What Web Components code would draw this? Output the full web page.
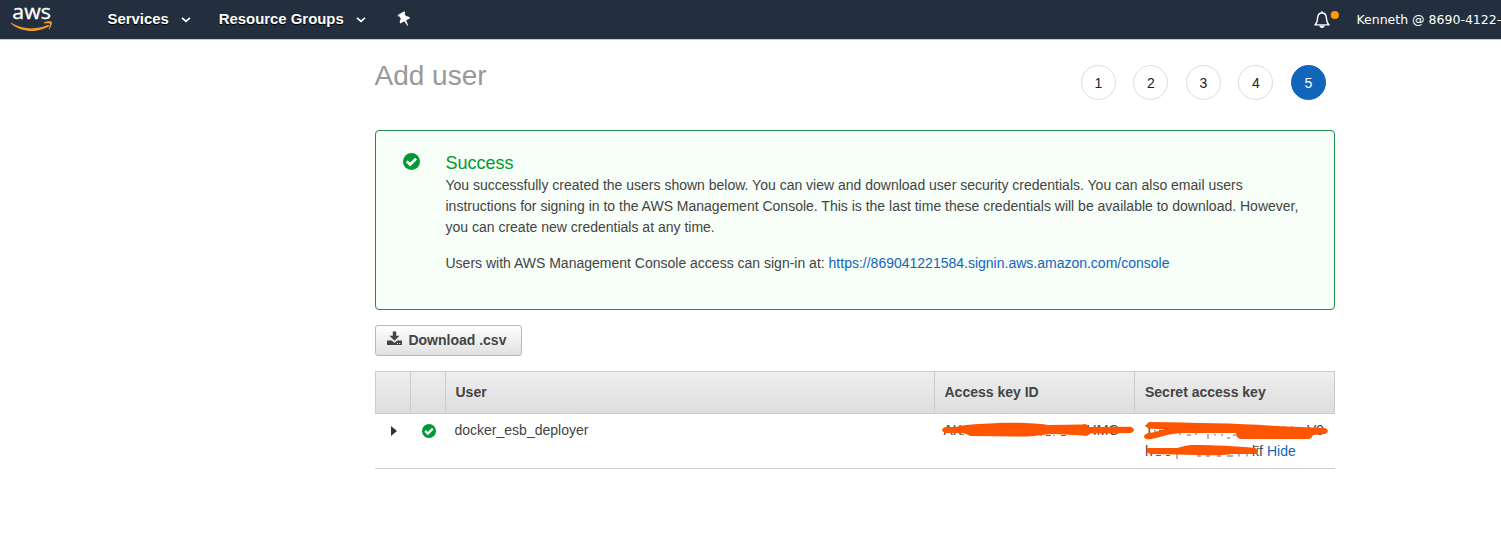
<!DOCTYPE html>
<html lang="en"><head><meta charset="utf-8"><title>Add user</title>
<style>html,body{margin:0;height:100%;background:#fff;overflow:hidden}body{font:14px/21px "Liberation Sans",Arial,sans-serif;color:#444}</style></head>
<body><iam-page></iam-page>
<script>
const define=(name,html)=>customElements.define(name,class extends HTMLElement{
  constructor(){super();const t=document.createElement('template');t.innerHTML=html;this.attachShadow({mode:'open'}).append(t.content.cloneNode(true));}
});

define('nav-menu',`<style>
:host{display:flex;align-items:center;gap:12px;font-weight:700;font-size:14.9px;line-height:20px;color:#fff;white-space:nowrap;text-shadow:0 1px 1px #000}
svg{display:block;margin-top:2px}</style><span><slot></slot></span>
<svg width="10" height="6" viewBox="0 0 10 6"><path d="M1 .8 5 4.4 9 .8" fill="none" stroke="#fff" stroke-width="1.7"/></svg>`);

define('aws-logo',`<style>
:host{display:block;width:42px;height:34px}
svg{display:block;overflow:visible}text{font:400 20.5px "Open Sans","Noto Sans",sans-serif;fill:#fff;stroke:#fff;stroke-width:.35px}</style>
<svg width="42" height="34" viewBox="0 0 42 34"><text x="1.3" y="18.6" textLength="38.5" lengthAdjust="spacingAndGlyphs">aws</text>
<path d="M.3 22.7C11.5 29.8 25.5 29.9 36.5 25.1 38 24.5 38.8 25.8 37.3 26.8 26 33.2 10.5 32.2.1 23.7-.4 23 .1 22.5.3 22.7Z" fill="#f19b2c"/>
<path d="M32.8 22.8C35.5 20.8 40.1 21 40.7 21.8S40.2 27.5 38.3 29.1C37.8 29.5 37.4 29.2 37.7 28.6 38.3 27.2 39.3 24.5 38.7 23.8S35 23.3 33.3 23.4C32.7 23.5 32.5 23.1 32.8 22.8Z" fill="#f19b2c"/></svg>`);

define('console-bar',`<style>
:host{display:flex;box-sizing:border-box;width:100%;height:40px;padding-left:11px;background:#232f3e;border-bottom:1px solid #c6c9cd;white-space:nowrap}
aws-logo{margin:0 54.5px 0 0}nav-menu{height:38px}.rg{margin-left:28px}.pin{margin:12px 0 0 31px}.bell{margin:10px 0 0 auto}
.account{box-sizing:border-box;width:162px;padding-left:17.5px;font:12.5px/39px "DejaVu Sans",sans-serif;color:#fff;overflow:hidden}svg{display:block;overflow:visible}</style>
<aws-logo></aws-logo><nav-menu>Services</nav-menu><nav-menu class="rg">Resource Groups</nav-menu>
<svg class="pin" width="15" height="15" viewBox="0 0 15 15"><g transform="translate(.3 .3) rotate(-28 7 7)" fill="#fff"><path d="M3.2 0h7.6v2H9.9v3.2c1.6.7 2.7 1.7 2.7 3.6H1.4c0-1.9 1.1-2.9 2.7-3.6V2h-.9Z"/><path d="M6 8.5h2.2L7.5 14.2H6.7Z"/></g></svg>
<svg class="bell" width="26" height="19" viewBox="0 0 26 19"><path d="M2 14.9c2.6-2 2.2-3.8 2.6-7.2C4.9 4.6 6.4 3 9 3s4.1 1.6 4.4 4.7c.4 3.4 0 5.2 2.6 7.2Z" fill="none" stroke="#fff" stroke-width="1.4" stroke-linejoin="round"/><path d="M8.2 3V1.3h1.6V3ZM6.4 15.5h5.2a2.6 2.4 0 0 1-5.2 0Z" fill="#fff"/><circle cx="21.8" cy="5" r="4.1" fill="#ff9900"/></svg>
<span class="account">Kenneth @ 8690-4122-1</span>`);

define('wizard-step',`<style>
:host{display:flex;box-sizing:border-box;width:35px;height:35px;align-items:center;justify-content:center;border:1px solid #ddd;border-radius:50%;color:#222;background:#fff;padding-top:2px}
:host([active]){background:#1166bb;border-color:#1166bb;color:#fff}</style><slot></slot>`);

define('ok-icon',`<style>:host{display:block;width:var(--size,14px);height:var(--size,14px)}svg{display:block;width:100%;height:100%}</style>
<svg viewBox="0 0 16 16"><circle cx="8" cy="8" r="8" fill="#093"/><path d="m3.6 7.8 3.1 3.1 5.6-5.6" fill="none" stroke="#fff" stroke-width="2.6"/></svg>`);

define('success-panel',`<style>
:host{display:flex;box-sizing:border-box;height:180px;border:1px solid #1c8e47;border-radius:4px;background:#f6fef7;padding:22px 30px 0 27.4px;gap:25.1px}
ok-icon{--size:17px;flex:none;margin-top:.4px}h2{margin:0;font-size:18px;line-height:21px;font-weight:400;color:#093}</style>
<ok-icon></ok-icon><div><h2>Success</h2><slot></slot></div>`);

define('download-button',`<style>
:host{display:flex;box-sizing:border-box;width:147px;height:31px;padding-left:11.4px;border:1px solid #b8b8b8;border-radius:3px;background:linear-gradient(#fff,#e0e0e0);font-weight:700;line-height:29px;gap:6px;white-space:nowrap}
svg{display:block;margin-top:5px}</style>
<svg width="15" height="15" viewBox="0 0 15 15" fill="#444"><path d="M5.8.5h3.4v4.2h3.3L7.5 9.8 2.5 4.7h3.3Z"/><path d="M0 9.4h4.6l2.9 2.4 2.9-2.4H15V14H0Z"/><path d="M10 12h1v1h-1zm2.2 0h1v1h-1z" fill="#eee"/></svg><span><slot></slot></span>`);

customElements.define('key-mask',class extends HTMLElement{
  constructor(){super();this.attachShadow({mode:'open'}).innerHTML=`<style>
:host{display:block;position:absolute;left:0;top:0}svg{display:block;overflow:visible}</style>
<svg width="200" height="54" viewBox="0 0 200 54" fill="#ff5500">${this.getAttribute('kind')==='id'
?'<path d="M29 20v1.5M107 20v2M112 21.5h5M120 20.5v1.5M127 21.5h5M138 20.5v1" stroke="#666" fill="none"/><path transform="translate(0 1)" d="M11 12 22 12C32 9 48 9 60 8.2 75 7.3 102 7.6 114 10L148 9.5Q153 8 155 12L197 11.8Q203 15 197 18L156 18.5Q154 22 149 20.5L120 19C102 20 101 22 84 21.5L36 21Q32 18 26 18L11 18Q5 15 11 12Z"/>'
:'<path d="M21 16v5M25 16.5h4M33 17.5h2M46 18v3M53 21h4M62 17v4M74 20v5M81 20v1.5M88 20v2M93 24h3M99 21h3M140 12.5h5M150 12v3M158 12v3M22 41.5h5M32 41.5h4M43 40v5M63 42h4M72 42h4M83 42h4M93 42h6M105 40v2.5M113 40v2.5M119 32.5h6" stroke="#666" fill="none"/><g transform="translate(3 1)"><path d="M12 7Q7 10 11 13.5L28 14.5Q14 18 11 18Q4 21 9 24Q12 25 19 23Q31 19 43 18L99 18Q99 24 105 24L172 24Q175 23 176 20L188 19Q194 16 188 13C173 12 154 12 138 11 100 8 60 8 12 7Z"/><path d="M12 33 40 33Q50 30 55 30C77 30 100 31 118 33Q124 36 119 39L95 39Q83 41 63 40L13 39Q6 36 12 33Z"/></g>'}</svg>`;}
});

define('user-table',`<style>
:host{display:grid;grid-template-columns:35px 35px 489px 200px 201px;grid-template-rows:43px 55px}
.h{box-sizing:border-box;border:1px solid #ccc;border-right:0;background:linear-gradient(#eee,#ddd);font-weight:700;line-height:41px;padding-left:9.5px}
.h.last{border-right:1px solid #ccc;padding-left:10px}
.c{box-sizing:border-box;position:relative;border-bottom:1px solid #ccc;padding:6px 0 0 9.5px;line-height:21px;white-space:nowrap}
.c.arrow{padding:12px 0 0 16px}ok-icon{margin:4px 0 0 2.5px}svg{display:block}
.line{display:flex}.line span:last-child{margin-left:auto}.id{width:175px}.secret{width:179px}.end{width:118px}.link{color:#16b;margin-left:4px}
.c.key{padding-left:11px}.row{display:flex}
</style>
<div class="h"></div><div class="h"></div><div class="h">User</div><div class="h">Access key ID</div><div class="h last">Secret access key</div>
<div class="c arrow"><svg width="6" height="10" viewBox="0 0 6 10"><path d="M0 0 6 5 0 10Z" fill="#333"/></svg></div>
<div class="c"><ok-icon></ok-icon></div><div class="c">docker_esb_deployer</div>
<div class="c"><div class="line id"><span>AK</span><span>HMC</span></div><key-mask kind="id"></key-mask></div>
<div class="c key"><div class="line secret"><span>T</span><span>V9</span></div><div class="row"><div class="line end"><span>h</span><span>kf</span></div><span class="link">Hide</span></div><key-mask kind="secret"></key-mask></div>`);

define('iam-page',`<style>
:host{display:block}main{width:960px;margin-left:375px}header{display:flex;justify-content:space-between;height:90px}
h1{margin:20px 0 0 -.5px;font-size:28px;line-height:32px;font-weight:400;color:#999}.steps{display:flex;gap:17.5px;margin:25px 9.2px 0 0}
download-button{margin:15px 0}p{margin:1px 0 15px;white-space:nowrap}a{color:#16b}</style>
<console-bar></console-bar><main><header><h1>Add user</h1><div class="steps"><wizard-step>1</wizard-step><wizard-step>2</wizard-step><wizard-step>3</wizard-step><wizard-step>4</wizard-step><wizard-step active>5</wizard-step></div></header>
<success-panel><p>You successfully created the users shown below. You can view and download user security credentials. You can also email users<br>instructions for signing in to the AWS Management Console. This is the last time these credentials will be available to download. However,<br>you can create new credentials at any time.</p><p>Users with AWS Management Console access can sign-in at: <a>https://869041221584.signin.aws.amazon.com/console</a></p></success-panel>
<download-button>Download .csv</download-button><user-table></user-table></main>`);
</script></body></html>
